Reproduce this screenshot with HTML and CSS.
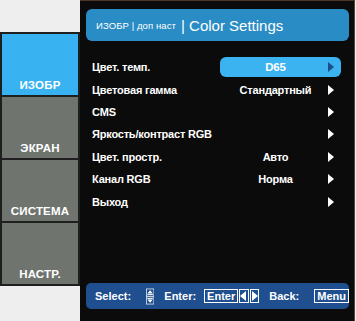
FILE: index.html
```html
<!DOCTYPE html>
<html lang="ru">
<head>
    <meta charset="UTF-8">
    <title>Color Settings</title>
    <link rel="stylesheet" href="styles.css">
</head>
<body>
    <div class="screen">
        <!-- Left tabs -->
        <div class="tabs">
            <div class="tab active">ИЗОБР</div>
            <div class="tab">ЭКРАН</div>
            <div class="tab">СИСТЕМА</div>
            <div class="tab">НАСТР.</div>
        </div>

        <!-- Menu panel -->
        <div class="panel">
            <div class="header">
                <span class="crumb">ИЗОБР | доп наст</span>
                <span class="title">| Color Settings</span>
            </div>

            <div class="menu">
                <div class="row">
                    <span class="label">Цвет. темп.</span>
                    <span class="value selected">D65<i class="arrow"></i></span>
                </div>
                <div class="row">
                    <span class="label">Цветовая гамма</span>
                    <span class="value">Стандартный<i class="arrow"></i></span>
                </div>
                <div class="row">
                    <span class="label">CMS</span>
                    <span class="value"><i class="arrow"></i></span>
                </div>
                <div class="row">
                    <span class="label">Яркость/контраст RGB</span>
                    <span class="value"><i class="arrow"></i></span>
                </div>
                <div class="row">
                    <span class="label">Цвет. простр.</span>
                    <span class="value">Авто<i class="arrow"></i></span>
                </div>
                <div class="row">
                    <span class="label">Канал RGB</span>
                    <span class="value">Норма<i class="arrow"></i></span>
                </div>
                <div class="row">
                    <span class="label">Выход</span>
                    <span class="value"><i class="arrow"></i></span>
                </div>
            </div>

            <!-- Key hints -->
            <div class="footer">
                <span class="hint">Select:</span>
                <svg class="updown" width="12" height="23" viewBox="0 0 12 23">
                    <rect x="0.5" y="0.5" width="11" height="10.5" fill="none" stroke="#fff"/>
                    <polygon points="6,2.5 10,7 2,7" fill="#fff"/>
                    <rect x="2" y="8" width="8" height="1.3" fill="#fff"/>
                    <rect x="0.5" y="12" width="11" height="10.5" fill="none" stroke="#fff"/>
                    <rect x="2" y="13.7" width="8" height="1.3" fill="#fff"/>
                    <polygon points="2,16 10,16 6,20.5" fill="#fff"/>
                </svg>
                <span class="hint enter">Enter:</span>
                <span class="key">Enter</span>
                <span class="key arrow-key"><svg width="7" height="10" viewBox="0 0 7 10"><polygon points="6,0 6,10 0,5" fill="#fff"/></svg></span>
                <span class="key arrow-key"><svg width="7" height="10" viewBox="0 0 7 10"><polygon points="1,0 7,5 1,10" fill="#fff"/></svg></span>
                <span class="hint back">Back:</span>
                <span class="key menu-key">Menu</span>
            </div>
        </div>
    </div>
</body>
</html>
```

FILE: styles.css
```css
* {
    margin: 0;
    padding: 0;
    box-sizing: border-box;
}

body {
    background-color: #eeeeee;
    font-family: "Liberation Sans", Arial, sans-serif;
    font-weight: bold;
    color: #fff;
    width: 356px;
    height: 321px;
    overflow: hidden;
}

.screen {
    display: flex;
    height: 321px;
}

/* Left tabs */
.tabs {
    width: 80px;
    margin-top: 32px;
    align-self: flex-start;
    display: flex;
    flex-direction: column;
    gap: 2px;
    padding: 2px;
    background-color: #1e1f1e;
}

.tab {
    height: 61px;
    background-color: #6f746f;
    display: flex;
    align-items: flex-end;
    justify-content: center;
    padding-bottom: 4px;
    font-size: 11.5px;
    letter-spacing: 0.2px;
}

.tab.active {
    background-color: #39b2f1;
}

/* Menu panel */
.panel {
    width: 275px;
    height: 321px;
    background-color: #0b0b0b;
    border-top: 1px solid #4a3526;
    border-right: 1px solid #5a4432;
    padding: 8px 5px 12px 6px;
    display: flex;
    flex-direction: column;
}

.header {
    height: 32px;
    border-radius: 6px;
    background-color: #2a8cc5;
    display: flex;
    align-items: center;
    padding-left: 10px;
    gap: 5px;
}

.crumb {
    font-size: 9.5px;
    font-weight: normal;
    letter-spacing: 0.1px;
}

.title {
    font-size: 15px;
    font-weight: normal;
}

.menu {
    margin-top: 15px;
}

.row {
    height: 22.4px;
    display: flex;
    align-items: center;
    padding-left: 6px;
    font-size: 11px;
    letter-spacing: -0.2px;
}

.label {
    flex: 1;
}

.value {
    position: relative;
    width: 121px;
    height: 20px;
    margin-right: 8px;
    padding-right: 10px;
    display: flex;
    align-items: center;
    justify-content: center;
    border-radius: 6px;
}

.value.selected {
    background-color: #3bb3f1;
    font-size: 11.5px;
}

.arrow {
    position: absolute;
    right: 7px;
    top: 5px;
    width: 0;
    height: 0;
    border-top: 5px solid transparent;
    border-bottom: 5px solid transparent;
    border-left: 6px solid #fff;
}

.selected .arrow {
    border-left-color: #1c4e8a;
}

/* Key hints */
.footer {
    margin-top: auto;
    height: 26px;
    border-radius: 5px;
    background-color: #1f4f8f;
    display: flex;
    align-items: center;
    padding-left: 9px;
    font-size: 11px;
}

.updown {
    margin-left: 15px;
}

.hint.enter {
    margin-left: 10px;
}

.key {
    margin-left: 8px;
    height: 14px;
    border: 1px solid #fff;
    padding: 0 2px;
    display: flex;
    align-items: center;
    font-size: 11px;
    line-height: 12px;
}

.arrow-key {
    margin-left: 1px;
    width: 13px;
    justify-content: center;
    padding: 0;
}

.hint.back {
    margin-left: 10px;
}

.menu-key {
    margin-left: 15px;
}
```
